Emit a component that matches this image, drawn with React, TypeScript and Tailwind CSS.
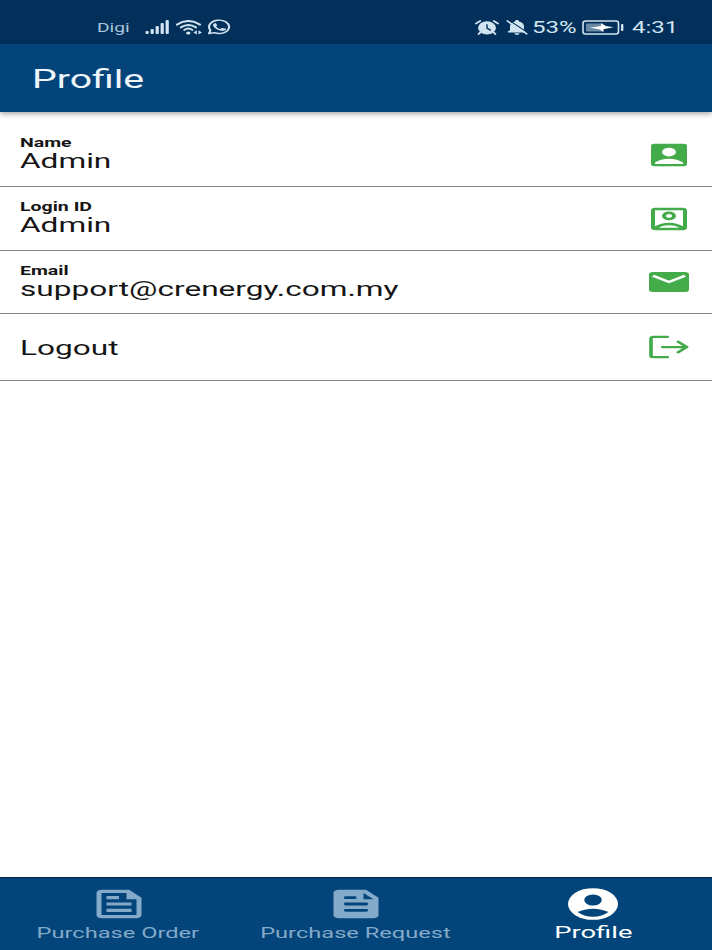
import type { ReactNode } from "react";

type IconProps = { className?: string };

function Icon({ className, children, box = "0 0 24 24" }: { className?: string; children: ReactNode; box?: string }) {
  return (
    <svg className={`shrink-0 ${className ?? ""}`} viewBox={box} preserveAspectRatio="none" fill="currentColor" aria-hidden="true">
      {children}
    </svg>
  );
}

function AccountBoxIcon({ className }: IconProps) {
  return (
    <Icon className={className}>
      <rect x="3" y="3" width="18" height="18" rx="1.8" />
      <circle cx="12" cy="9.6" r="3.5" fill="#fff" />
      <path d="M5 19.2v-1.3q1.35-1.33 3.14-2.1T12 15q2.08 0 3.86.8T19 17.9v1.3Z" fill="#fff" />
    </Icon>
  );
}

function AccountBoxOutlineIcon({ className }: IconProps) {
  return (
    <Icon className={className}>
      <path d="M5 17.85q1.35-1.325 3.138-2.087T12 15q2.075 0 3.863.763T19 17.85V5H5v12.85ZM12 13q-1.45 0-2.475-1.025T8.5 9.5q0-1.45 1.025-2.475T12 6q1.45 0 2.475 1.025T15.5 9.5q0 1.45-1.025 2.475T12 13Zm0-2q.625 0 1.063-.437T13.5 9.5q0-.625-.437-1.062T12 8q-.625 0-1.062.438T10.5 9.5q0 .625.438 1.063T12 11Zm-7 10q-.825 0-1.413-.588T3 19V5q0-.825.588-1.413T5 3h14q.825 0 1.413.588T21 5v14q0 .825-.588 1.413T19 21H5Zm2-2h10v-.25q-1.05-.875-2.325-1.313T12 17q-1.4 0-2.675.438T7 18.75V19Z" fillRule="evenodd" />
    </Icon>
  );
}

function MailIcon({ className }: IconProps) {
  return (
    <Icon className={className}>
      <rect x="2" y="4" width="20" height="16" rx="2" />
      <path d="M4 7l8 5 8-5" fill="none" stroke="#fff" strokeWidth="1.8" />
    </Icon>
  );
}

function LogoutIcon({ className }: IconProps) {
  return (
    <Icon className={className}>
      <g fill="none" stroke="currentColor" strokeWidth="1.8" strokeLinecap="round" strokeLinejoin="round">
        <path d="M11.2 3.9H4.1a1.1 1.1 0 0 0-1.1 1.1v14a1.1 1.1 0 0 0 1.1 1.1h7.1" />
        <path d="M8.8 12h11.8M16.6 7.8l4.3 4.2-4.3 4.2" />
      </g>
    </Icon>
  );
}

function FeedOutlineIcon({ className }: IconProps) {
  return (
    <Icon className={className}>
      <path d="M16 3H5a2 2 0 0 0-2 2v14a2 2 0 0 0 2 2h14a2 2 0 0 0 2-2V8zM5 19V5h10v4h4v10zM7 7h5v2H7zM7 11h10v2H7zM7 15h10v2H7z" fillRule="evenodd" />
    </Icon>
  );
}

function FeedIcon({ className }: IconProps) {
  return (
    <Icon className={className}>
      <path d="M16 3H5a2 2 0 0 0-2 2v14a2 2 0 0 0 2 2h14a2 2 0 0 0 2-2V8zM15 5l4 4h-4z" fillRule="evenodd" />
      <path d="M8 8h3.4M8 12h8M8 16h8" stroke="#03457a" strokeWidth="1.8" strokeLinecap="round" />
    </Icon>
  );
}

function AccountCircleIcon({ className }: IconProps) {
  return (
    <Icon className={className}>
      <circle cx="12" cy="12" r="10" />
      <circle cx="12" cy="9.5" r="3.5" fill="#03457a" />
      <path d="M5.85 17.1q1.28-.98 2.85-1.54T12 15t3.3.56 2.85 1.54q-1.15 1.4-2.75 2.15T12 20t-3.4-.75-2.75-2.15Z" fill="#03457a" />
    </Icon>
  );
}

function SignalIcon({ className }: IconProps) {
  return (
    <Icon className={className} box="0 0 24 14">
      <rect x="0.5" y="11" width="3.2" height="3" rx="1" />
      <rect x="5.6" y="9" width="3.2" height="5" rx="1" />
      <rect x="10.6" y="6" width="3.2" height="8" rx="1" />
      <rect x="15.6" y="3" width="3.2" height="11" rx="1" />
      <rect x="20.6" y="0" width="3.2" height="14" rx="1" />
    </Icon>
  );
}

function WifiIcon({ className }: IconProps) {
  return (
    <Icon className={className} box="0 0 26 15">
      <g fill="none" stroke="currentColor" strokeWidth="2" strokeLinecap="round">
        <path d="M1 4.6Q12.3-2.6 24 4.6" />
        <path d="M4.8 7.4Q12.4 2.4 20 7.4" />
        <path d="M8.2 10Q12.3 7.2 16.4 10" />
      </g>
      <ellipse cx="12.3" cy="13" rx="2.2" ry="1.6" />
      <path d="M20.8 10.2v4.4l-3.4-2.2zM22.5 10.2v4.4l3.4-2.2z" />
    </Icon>
  );
}

function WhatsAppIcon({ className }: IconProps) {
  return (
    <Icon className={className}>
      <path d="M17.47 14.38c-.3-.15-1.76-.87-2.03-.97-.27-.1-.47-.15-.67.15-.2.3-.77.97-.94 1.16-.17.2-.35.22-.64.08-.3-.15-1.26-.46-2.39-1.48-.88-.79-1.48-1.76-1.65-2.06-.17-.3-.02-.46.13-.61.13-.13.3-.35.45-.52.15-.17.2-.3.3-.5.1-.2.05-.37-.03-.52-.07-.15-.67-1.61-.92-2.2-.24-.58-.48-.5-.66-.51h-.57c-.2 0-.52.07-.8.37-.27.3-1.04 1.01-1.04 2.48s1.07 2.87 1.22 3.07c.15.2 2.1 3.2 5.07 4.49 2.5 1.08 3.5.9 4.5.7.8-.15 1.76-.72 2-1.41.25-.7.25-1.29.18-1.42-.08-.12-.27-.2-.57-.34z" />
      <path d="M2 21.8l1.5-4.9A10 10 0 1 1 7.2 20.5z" fill="none" stroke="currentColor" strokeWidth="2.1" strokeLinejoin="round" />
    </Icon>
  );
}

function AlarmIcon({ className }: IconProps) {
  return (
    <Icon className={className} box="0 0 24 15">
      <ellipse cx="12" cy="7.8" rx="9" ry="6.6" />
      <path d="M1 3.6L5.2 1M23 3.6L18.8 1M6 12l-2.4 2M18 12l2.4 2" fill="none" stroke="currentColor" strokeWidth="1.8" strokeLinecap="round" />
      <path d="M12 4.2v4l3.8 2.2" fill="none" stroke="#02305a" strokeWidth="1.4" />
    </Icon>
  );
}

function BellOffIcon({ className }: IconProps) {
  return (
    <Icon className={className} box="0 0 22 15">
      <path d="M9 1.5C9 .5 9.9 0 11 0s2 .5 2 1.5c3 .7 5 2.4 5 4.8v4l2.2 2.2H1.8v-1L4 10.2V6.3c0-2.4 2-4.1 5-4.8zM8.3 13.2h5.4Q13.3 15 11 15t-2.7-1.8z" />
      <path d="M2.6 0L22 12.8" stroke="#02305a" strokeWidth="1.1" />
      <path d="M1.2.9l19.6 13" stroke="currentColor" strokeWidth="1.6" strokeLinecap="round" />
    </Icon>
  );
}

function BatteryIcon({ className }: IconProps) {
  return (
    <Icon className={className} box="0 0 42 15">
      <rect x="1" y="1" width="35.5" height="13" rx="2.5" fill="none" stroke="currentColor" strokeWidth="1.6" />
      <rect x="4" y="3.5" width="17" height="8" rx="1" opacity=".5" />
      <path d="M8 7.8L19 6V3.2L24 6l7.5 1.3-10 1.9V12L17 9.2z" fill="#fff" />
      <rect x="39" y="4" width="2.4" height="7" rx="1" />
    </Icon>
  );
}

function StatusBar() {
  return (
    <div className="flex h-11 items-center bg-[#02305a] pt-[10px] text-[#d3e4f1]">
      <span className="mt-0.5 ml-[97px] w-[48px] origin-left scale-x-[1.6] text-[12px] leading-4 whitespace-nowrap text-[#a9c6dc]">Digi</span>
      <SignalIcon className="h-3.5 w-6" />
      <WifiIcon className="ml-[7px] h-[15px] w-[26px]" />
      <WhatsAppIcon className="ml-[5px] h-4 w-6" />
      <AlarmIcon className="ml-[244px] h-[15px] w-6" />
      <BellOffIcon className="ml-[7px] h-[15px] w-[22px]" />
      <span className="mt-0.5 ml-[4px] w-[50px] origin-left scale-x-[1.5] text-[16px] leading-4 whitespace-nowrap">53%</span>
      <BatteryIcon className="h-[15px] w-[42px]" />
      <span className="mt-0.5 ml-[8px] origin-left scale-x-[1.5] text-[16px] leading-4 whitespace-nowrap">4:31</span>
    </div>
  );
}

function Row({ label, value, icon, className }: { label?: string; value: string; icon: ReactNode; className: string }) {
  return (
    <li className={`flex items-center justify-between border-b border-[#858585] pr-[19.5px] pl-5 ${className}`}>
      <div className={`flex flex-col items-start ${label ? "pb-[3px]" : "pt-px"}`}>
        {label && <span className="origin-left scale-x-[1.5] text-[13px] leading-4 font-bold">{label}</span>}
        <span className="origin-left scale-x-[1.58] text-[20px] leading-5">{value}</span>
      </div>
      {icon}
    </li>
  );
}

export default function App() {
  return (
    <div className="flex h-[950px] w-[712px] flex-col overflow-hidden bg-white font-['Roboto',sans-serif] text-[#151515]">
      <StatusBar />
      <header className="z-10 flex h-[68px] items-center bg-[#03457a] pt-[3px] pl-8 shadow-[0_2px_5px_rgba(0,0,0,0.35)]">
        <h1 className="origin-left scale-x-[1.57] text-[25px] leading-8 text-[#eef5fb]">Profile</h1>
      </header>

      <main className="flex-1 pt-[11px]">
        <ul>
          <Row className="h-16" label="Name" value="Admin" icon={<AccountBoxIcon className="h-[30px] w-12 text-[#43ab4a]" />} />
          <Row className="h-16" label="Login ID" value="Admin" icon={<AccountBoxOutlineIcon className="h-[30px] w-12 text-[#43ab4a]" />} />
          <Row className="h-[63px]" label="Email" value="support@crenergy.com.my" icon={<MailIcon className="h-[30px] w-12 text-[#43ab4a]" />} />
          <Row className="h-[67px]" value="Logout" icon={<LogoutIcon className="h-[30px] w-12 text-[#43ab4a]" />} />
        </ul>
      </main>

      <nav className="grid h-[73px] grid-cols-3 border-t border-[#022346] bg-[#03457a] text-[#84aaca]">
        <a className="flex flex-col items-center pt-[7px]" href="#">
          <FeedOutlineIcon className="h-[38px] w-[60px]" />
          <span className="mt-px mr-px scale-x-[1.63] text-[14.5px] leading-5 whitespace-nowrap">Purchase Order</span>
        </a>
        <a className="flex flex-col items-center pt-[7px]" href="#">
          <FeedIcon className="h-[38px] w-[60px]" />
          <span className="mt-px mr-px scale-x-[1.63] text-[14.5px] leading-5 whitespace-nowrap">Purchase Request</span>
        </a>
        <a className="flex flex-col items-center pt-[7px] text-white" href="#">
          <AccountCircleIcon className="h-[38px] w-[60px]" />
          <span className="scale-x-[1.61] text-[17px] leading-[18px] whitespace-nowrap">Profile</span>
        </a>
      </nav>
    </div>
  );
}
